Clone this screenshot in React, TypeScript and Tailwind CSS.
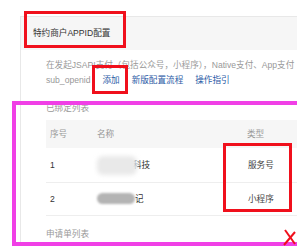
import React from 'react'

type Row = { id: number; tail: string; type: string; dark: boolean }

const rows: Row[] = [
  { id: 1, tail: '科技', type: '服务号', dark: false },
  { id: 2, tail: '记', type: '小程序', dark: true },
]

const App: React.FC = () => {
  return (
    <div
      className="relative w-[297px] h-[247px] overflow-hidden bg-white"
      style={{ fontFamily: '"Liberation Sans", "Noto Sans CJK SC", sans-serif' }}
    >
      <div className="ml-[20px] mt-[16px] w-[320px] border-l border-t border-[#e8e8e8]">
        {/* card header */}
        <div className="h-[33px] bg-[#f6f6f6] pl-[12px] flex items-center text-[8.6px] text-[#333]">
          特约商户APPID配置
        </div>

        <div className="pl-[25px] pt-[8px]">
          <div className="text-[8.6px] leading-[15px] text-[#999] whitespace-nowrap">
            在发起JSAPI支付（包括公众号，小程序），Native支付、App支付
          </div>
          <div className="text-[8.6px] leading-[15px] text-[#999] whitespace-nowrap flex gap-[12px]">
            <span>sub_openid</span>
            <span className="text-[#2b5ba6]">添加</span>
            <span className="text-[#2b5ba6]">新版配置流程</span>
            <span className="text-[#2b5ba6]">操作指引</span>
          </div>

          <div className="mt-[13px] text-[8.6px] leading-[15px] text-[#999]">已绑定列表</div>

          <div className="mt-[4px] w-[280px] text-[8.6px]">
            <div className="h-[28px] bg-[#f6f6f6] flex items-center text-[#999]">
              <span className="w-[51px] pl-[4px]">序号</span>
              <span className="w-[150px]">名称</span>
              <span>类型</span>
            </div>
            {rows.map((row) => (
              <div
                key={row.id}
                className={`flex items-center border-b border-[#eeeeee] text-[#333] ${row.id === 1 ? 'h-[35px]' : 'h-[33px]'}`}
              >
                <span className="w-[51px] pl-[4px]">{row.id}</span>
                <span className="w-[150px] flex items-center">
                  {row.dark ? (
                    <span className="relative z-10 w-[38px] h-[11px] rounded-full bg-[#b4b4b4] blur-[1px]" />
                  ) : (
                    <span className="relative z-10 -mr-[4px] w-[40px] h-[19px] rounded-[6px] bg-[#e9e9e9] blur-[2px]" />
                  )}
                  <span>{row.tail}</span>
                </span>
                <span className="pl-[1px] text-[#444]">{row.type}</span>
              </div>
            ))}
          </div>

          <div className="mt-[11px] text-[8.6px] leading-[15px] text-[#999]">申请单列表</div>
        </div>
      </div>

      {/* annotations drawn over the screenshot */}
      <div className="absolute left-[24px] top-[11px] w-[102px] h-[37px] border-[3px] border-[#f0101c]" />
      <div className="absolute left-[92px] top-[65px] w-[36px] h-[29px] border-[3px] border-[#f0101c]" />
      <div className="absolute left-[223px] top-[143px] w-[69px] h-[69px] border-[3px] border-[#f0101c]" />
      <div className="absolute left-[12px] top-[101px] w-[300px] h-[145px] border-4 border-[#f03fe6]" />
      <svg className="absolute left-[283px] top-[229px]" width="14" height="17" viewBox="0 0 14 17">
        <path d="M2 1 L12 15" stroke="#f0101c" strokeWidth="2" fill="none" />
        <path d="M12 3 L1 16" stroke="#f0101c" strokeWidth="2" fill="none" />
      </svg>
    </div>
  )
}

export default App
